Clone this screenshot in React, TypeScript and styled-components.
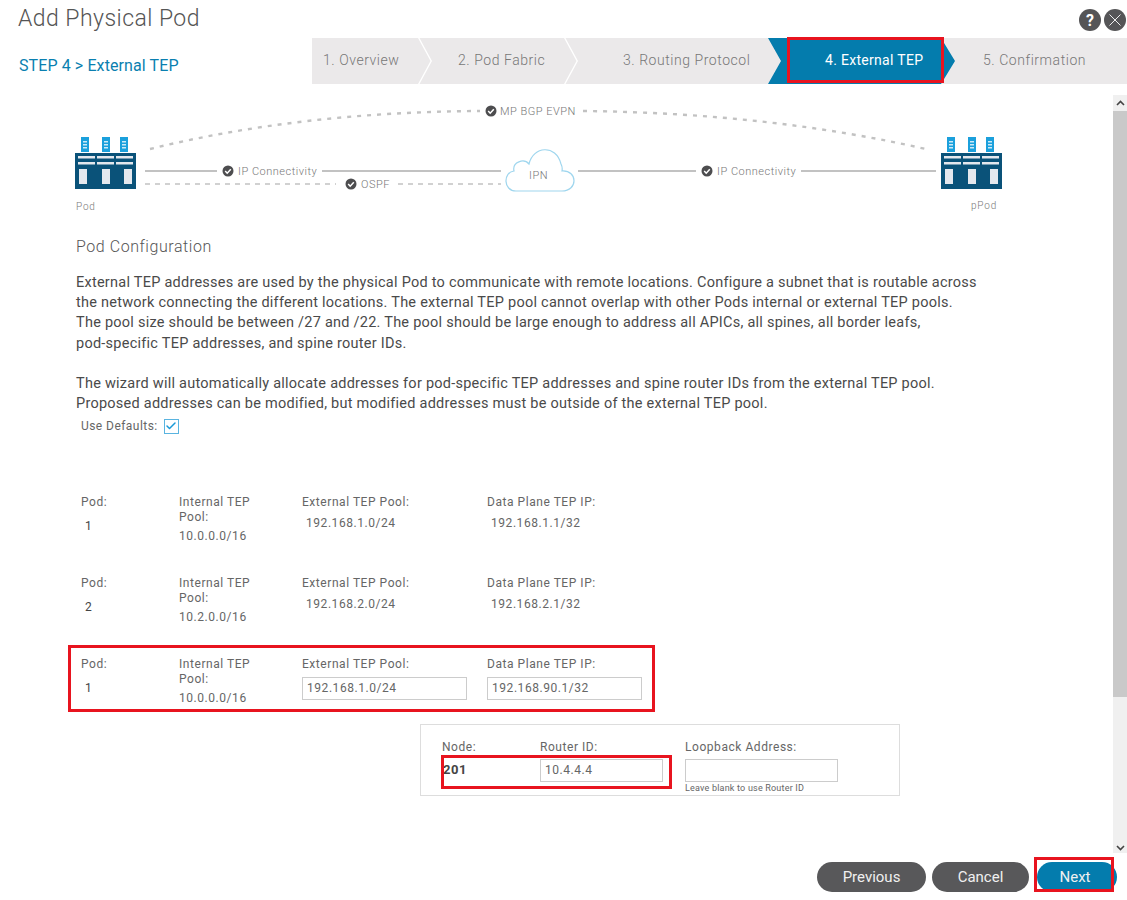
import React from "react";
import styled, { createGlobalStyle } from "styled-components";
import { Check } from "lucide-react";

const GlobalStyle = createGlobalStyle`
  html, body {
    margin: 0;
    padding: 0;
    background: #fff;
    font-family: Roboto, "Liberation Sans", sans-serif;
  }
`;

const RED = "#e8141f";
const BLUE = "#047cad";

const Page = styled.div`
  width: 1127px;
  height: 900px;
  overflow: hidden;
  display: flex;
  flex-direction: column;
  color: #666;
`;

const Header = styled.header`
  height: 38px;
  padding: 0 0 0 18px;
  display: flex;
  justify-content: space-between;
`;

const Title = styled.h1`
  margin: 4px 0 0;
  font-size: 23px;
  line-height: 30px;
  font-weight: 300;
  letter-spacing: 0.45px;
  color: #555;
`;

const HeaderIcons = styled.div`
  display: flex;
  gap: 3px;
  margin: 9px 1px 0 0;
`;

const RoundIcon = styled.span`
  width: 22px;
  height: 22px;
  border-radius: 50%;
  background: #555557;
  color: #fff;
  font-size: 16px;
  font-weight: 700;
  display: flex;
  align-items: center;
  justify-content: center;
`;

const StepBar = styled.div`
  height: 46px;
  display: flex;
`;

const StepName = styled.div`
  flex: none;
  width: 312px;
  padding: 19px 0 0 19px;
  box-sizing: border-box;
  font-size: 16px;
  line-height: 18px;
  letter-spacing: 0.1px;
  color: #0a7fb0;
`;

const Steps = styled.ol`
  flex: 1;
  margin: 0;
  padding: 0;
  list-style: none;
  display: flex;
  background: #ebe9ea;
`;

const Step = styled.li<{ $width?: number; $pad: number; $chevron?: boolean }>`
  position: relative;
  box-sizing: border-box;
  flex: ${(p) => (p.$width ? `0 0 ${p.$width}px` : "1")};
  padding-left: ${(p) => p.$pad}px;
  font-size: 14px;
  font-weight: 300;
  letter-spacing: 0.55px;
  line-height: 44px;
  color: #777;

  ${(p) =>
    p.$chevron &&
    `
    &::after {
      content: "";
      position: absolute;
      top: 0;
      right: -14px;
      width: 14px;
      height: 100%;
      background: #fff;
      clip-path: polygon(0 0, 1.5px 0, 100% 50%, 1.5px 100%, 0 100%, 12.5px 50%);
    }
  `}
`;

const ActiveStep = styled.li`
  position: relative;
  z-index: 1;
  flex: none;
  box-sizing: border-box;
  width: 187px;
  margin-right: -14px;
  padding-left: 57px;
  background: ${BLUE};
  color: #fff;
  font-size: 14px;
  letter-spacing: 0.3px;
  line-height: 44px;
  clip-path: polygon(0 0, 173px 0, 100% 50%, 173px 100%, 0 100%, 13px 50%);
`;

const ActiveMark = styled.div`
  position: absolute;
  z-index: 2;
  top: 37px;
  left: 787px;
  width: 157px;
  height: 46px;
  box-sizing: border-box;
  border: 3px solid ${RED};
`;

const Body = styled.div`
  flex: none;
  height: 758px;
  margin-top: 11px;
  display: flex;
`;

const Content = styled.main`
  flex: 1;
  min-width: 0;
`;

const Scrollbar = styled.div`
  width: 14px;
  display: flex;
  flex-direction: column;
  background: #f0f0f0;
`;

const ScrollArrow = styled.div<{ $height: number }>`
  height: ${(p) => p.$height}px;
  display: flex;
  align-items: center;
  justify-content: center;
`;

const ScrollThumb = styled.div`
  height: 586px;
  background: #c9c9c9;
`;

const ScrollGap = styled.div`
  flex: 1;
`;

const DiagramSvg = styled.svg`
  display: block;
  width: 1113px;
  height: 125px;
`;

const DiagramLabel = styled.text`
  font-family: Roboto, "Liberation Sans", sans-serif;
  font-size: 11px;
  font-weight: 300;
  letter-spacing: 0.5px;
  fill: #777;
`;

const CaptionLabel = styled(DiagramLabel)`
  font-size: 10px;
  letter-spacing: 0.8px;
`;

const Section = styled.section`
  padding-left: 76px;
`;

const Heading = styled.h2`
  margin: 17px 0 0;
  font-size: 16px;
  line-height: 20px;
  font-weight: 300;
  letter-spacing: 0.55px;
  color: #555;
`;

const Paragraph = styled.p`
  margin: 16px 0 0;
  font-size: 14.5px;
  line-height: 20.2px;
  font-weight: 400;
  letter-spacing: 0.25px;
  color: #4a4a4a;
  white-space: nowrap;

  & + & {
    margin-top: 20px;
  }
`;

const Defaults = styled.label`
  margin: 4px 0 0 5px;
  display: flex;
  align-items: center;
  gap: 6px;
  font-size: 12px;
  line-height: 16px;
  letter-spacing: 0.45px;
`;

const CheckBox = styled.span`
  width: 13px;
  height: 13px;
  border: 1px solid #5ab4e0;
  display: flex;
  align-items: center;
  justify-content: center;
  color: #1a9ad8;
`;

const PodList = styled.div`
  margin-top: 61px;
  display: flex;
  flex-direction: column;
`;

const PodRow = styled.div<{ $marked?: boolean }>`
  position: relative;
  height: 81px;
  padding-left: 81px;
  box-sizing: border-box;
  display: grid;
  grid-template-columns: 98px 123px 185px 170px;
  font-size: 12px;
  letter-spacing: 0.55px;
  line-height: 15px;

  ${(p) =>
    p.$marked &&
    `
    &::after {
      content: "";
      position: absolute;
      left: 68px;
      top: -12px;
      width: 587px;
      height: 67px;
      box-sizing: border-box;
      border: 3px solid ${RED};
    }
  `}
`;

const Cell = styled.div`
  display: flex;
  flex-direction: column;
`;

const PodValue = styled.div`
  margin: 9px 0 0 4px;
  color: #444;
`;

const PoolValue = styled.div`
  margin-top: 4px;
`;

const PlainValue = styled.div`
  margin: 6px 0 0 4px;
`;

const TextField = styled.div<{ $width: number }>`
  box-sizing: border-box;
  width: ${(p) => p.$width}px;
  height: 23px;
  margin-top: 5px;
  padding-left: 4px;
  border: 1px solid #ccc;
  line-height: 21px;
`;

const NodeField = styled(TextField)`
  margin-top: 4px;
`;

const NodeBox = styled.div`
  position: relative;
  box-sizing: border-box;
  width: 480px;
  height: 72px;
  margin: -14px 0 0 420px;
  padding: 15px 0 0 21px;
  border: 1px solid #ddd;
  display: grid;
  grid-template-columns: 98px 145px 160px;
  font-size: 12px;
  letter-spacing: 0.55px;
  line-height: 15px;

  &::after {
    content: "";
    position: absolute;
    left: 20px;
    top: 30px;
    width: 231px;
    height: 34px;
    box-sizing: border-box;
    border: 3px solid ${RED};
  }
`;

const NodeValue = styled.div`
  margin: 7px 0 0 1px;
  font-size: 13px;
  font-weight: 700;
  color: #444;
`;

const Hint = styled.div`
  margin-top: 1px;
  font-size: 9px;
  line-height: 11px;
  letter-spacing: 0.2px;
  white-space: nowrap;
`;

const Footer = styled.footer`
  margin-top: 9px;
  padding-right: 10px;
  display: flex;
  justify-content: flex-end;
  gap: 6px;
`;

const Button = styled.button<{ $width: number; $primary?: boolean }>`
  position: relative;
  width: ${(p) => p.$width}px;
  height: 30px;
  margin-left: ${(p) => (p.$primary ? 2 : 0)}px;
  padding: 0 ${(p) => (p.$primary ? 4 : 0)}px 0 0;
  border: 0;
  border-radius: 15px;
  background: ${(p) => (p.$primary ? BLUE : "#58585a")};
  color: #f0f0f0;
  font-family: Roboto, "Liberation Sans", sans-serif;
  font-size: 15px;

  ${(p) =>
    p.$primary &&
    `
    &::after {
      content: "";
      position: absolute;
      left: -3px;
      top: -5px;
      width: 80px;
      height: 35px;
      box-sizing: border-box;
      border: 3px solid ${RED};
    }
  `}
`;

const PodIcon: React.FC<{ x: number }> = ({ x }) => (
  <g transform={`translate(${x} 0)`}>
    {[6, 27, 45].map((t) => (
      <g key={t}>
        <rect x={t} y={137} width={8} height={15} fill="#1ba0dc" />
        <rect x={t + 2} y={141} width={4} height={1.5} fill="#cdeaf7" />
        <rect x={t + 2} y={144} width={4} height={1.5} fill="#cdeaf7" />
        <rect x={t + 2} y={147} width={4} height={1.5} fill="#cdeaf7" />
      </g>
    ))}
    <rect x={0} y={153} width={61} height={36} fill="#0a5279" />
    {[3, 22, 41].map((t) => (
      <g key={t} fill="#e4e8ee">
        <rect x={t} y={156} width={17} height={2.5} />
        <rect x={t} y={162} width={17} height={2.5} />
      </g>
    ))}
    <rect x={4} y={169} width={8} height={15} fill="#e4e8ee" />
    <rect x={27} y={169} width={8} height={15} fill="#e4e8ee" />
    <rect x={49} y={169} width={8} height={15} fill="#e4e8ee" />
  </g>
);

const Tick: React.FC<{ x: number; y: number }> = ({ x, y }) => (
  <g>
    <circle cx={x} cy={y} r={5.5} fill="#4d4d4f" />
    <path d={`M${x - 2.8} ${y} l2 2.2 l3.6 -4`} fill="none" stroke="#fff" strokeWidth={1.5} />
  </g>
);

const Diagram: React.FC = () => (
  <DiagramSvg viewBox="0 95 1113 125">
    <PodIcon x={75} />
    <PodIcon x={941} />
    <g fill="none" stroke="#c2c2c2" strokeWidth={2.4}>
      <path d="M150 149 Q300 112 480 111" strokeDasharray="4 6" />
      <path d="M583 111 Q770 113 930 150" strokeDasharray="4 6" />
      <path d="M145 171 H217 M322 171 H501 M578 171 H696 M801 171 H936" strokeWidth={2} />
      <path d="M145 184 H336 M398 184 H501" strokeDasharray="5 5" strokeWidth={1.5} />
    </g>
    <path
      d="M516 191 C503 191 503 172 514 171 C512 162 524 158 529 164 C533 146 556 144 561 164 C563 168 562 170 562 171 C578 170 578 191 562 191 Z"
      fill="#fff"
      stroke="#9fd6ee"
      strokeWidth={1.2}
    />
    <Tick x={228} y={171} />
    <Tick x={351} y={184} />
    <Tick x={491} y={111} />
    <Tick x={707} y={171} />
    <DiagramLabel x={238} y={175}>IP Connectivity</DiagramLabel>
    <DiagramLabel x={361} y={188}>OSPF</DiagramLabel>
    <DiagramLabel x={500} y={115}>MP BGP EVPN</DiagramLabel>
    <DiagramLabel x={717} y={175}>IP Connectivity</DiagramLabel>
    <DiagramLabel x={529} y={179}>IPN</DiagramLabel>
    <CaptionLabel x={76} y={210}>Pod</CaptionLabel>
    <CaptionLabel x={971} y={209}>pPod</CaptionLabel>
  </DiagramSvg>
);

interface PodData {
  pod: string;
  internal: string;
  external: string;
  dataPlane: string;
  editable?: boolean;
}

const pods: PodData[] = [
  { pod: "1", internal: "10.0.0.0/16", external: "192.168.1.0/24", dataPlane: "192.168.1.1/32" },
  { pod: "2", internal: "10.2.0.0/16", external: "192.168.2.0/24", dataPlane: "192.168.2.1/32" },
  { pod: "1", internal: "10.0.0.0/16", external: "192.168.1.0/24", dataPlane: "192.168.90.1/32", editable: true },
];

export default function App() {
  return (
    <Page>
      <GlobalStyle />
      <Header>
        <Title>Add Physical Pod</Title>
        <HeaderIcons>
          <RoundIcon>?</RoundIcon>
          <RoundIcon>
            <svg width="14" height="14" viewBox="0 0 14 14">
              <path d="M1.5 1.5 L12.5 12.5 M12.5 1.5 L1.5 12.5" stroke="#eee" strokeWidth="1" />
            </svg>
          </RoundIcon>
        </HeaderIcons>
      </Header>

      <StepBar>
        <StepName>STEP 4 &gt; External TEP</StepName>
        <Steps>
          <Step $width={106} $pad={11} $chevron>1. Overview</Step>
          <Step $width={146} $pad={40} $chevron>2. Pod Fabric</Step>
          <Step $width={204} $pad={59}>3. Routing Protocol</Step>
          <ActiveStep>4. External TEP</ActiveStep>
          <Step $pad={42}>5. Confirmation</Step>
        </Steps>
      </StepBar>
      <ActiveMark />

      <Body>
        <Content>
          <Diagram />
          <Section>
            <Heading>Pod Configuration</Heading>
            <Paragraph>
              External TEP addresses are used by the physical Pod to communicate with remote locations. Configure a subnet that is routable across<br />
              the network connecting the different locations. The external TEP pool cannot overlap with other Pods internal or external TEP pools.<br />
              The pool size should be between /27 and /22. The pool should be large enough to address all APICs, all spines, all border leafs,<br />
              pod-specific TEP addresses, and spine router IDs.
            </Paragraph>
            <Paragraph>
              The wizard will automatically allocate addresses for pod-specific TEP addresses and spine router IDs from the external TEP pool.<br />
              Proposed addresses can be modified, but modified addresses must be outside of the external TEP pool.
            </Paragraph>
            <Defaults>
              Use Defaults:
              <CheckBox>
                <Check size={12} strokeWidth={3} />
              </CheckBox>
            </Defaults>
          </Section>

          <PodList>
            {pods.map((row, i) => (
              <PodRow key={i} $marked={row.editable}>
                <Cell>
                  Pod:
                  <PodValue>{row.pod}</PodValue>
                </Cell>
                <Cell>
                  <div>Internal TEP<br />Pool:</div>
                  <PoolValue>{row.internal}</PoolValue>
                </Cell>
                <Cell>
                  External TEP Pool:
                  {row.editable ? (
                    <TextField $width={165}>{row.external}</TextField>
                  ) : (
                    <PlainValue>{row.external}</PlainValue>
                  )}
                </Cell>
                <Cell>
                  Data Plane TEP IP:
                  {row.editable ? (
                    <TextField $width={155}>{row.dataPlane}</TextField>
                  ) : (
                    <PlainValue>{row.dataPlane}</PlainValue>
                  )}
                </Cell>
              </PodRow>
            ))}
          </PodList>

          <NodeBox>
            <Cell>
              Node:
              <NodeValue>201</NodeValue>
            </Cell>
            <Cell>
              Router ID:
              <NodeField $width={123}>10.4.4.4</NodeField>
            </Cell>
            <Cell>
              Loopback Address:
              <NodeField $width={153} />
              <Hint>Leave blank to use Router ID</Hint>
            </Cell>
          </NodeBox>
        </Content>

        <Scrollbar>
          <ScrollArrow $height={16}>
            <svg width="9" height="6" viewBox="0 0 9 6">
              <path d="M1 5 L4.5 1.5 L8 5" fill="none" stroke="#444" strokeWidth="1.6" />
            </svg>
          </ScrollArrow>
          <ScrollThumb />
          <ScrollGap />
          <ScrollArrow $height={10}>
            <svg width="9" height="6" viewBox="0 0 9 6">
              <path d="M1 1 L4.5 4.5 L8 1" fill="none" stroke="#444" strokeWidth="1.6" />
            </svg>
          </ScrollArrow>
        </Scrollbar>
      </Body>

      <Footer>
        <Button $width={109}>Previous</Button>
        <Button $width={97}>Cancel</Button>
        <Button $width={80} $primary>Next</Button>
      </Footer>
    </Page>
  );
}
